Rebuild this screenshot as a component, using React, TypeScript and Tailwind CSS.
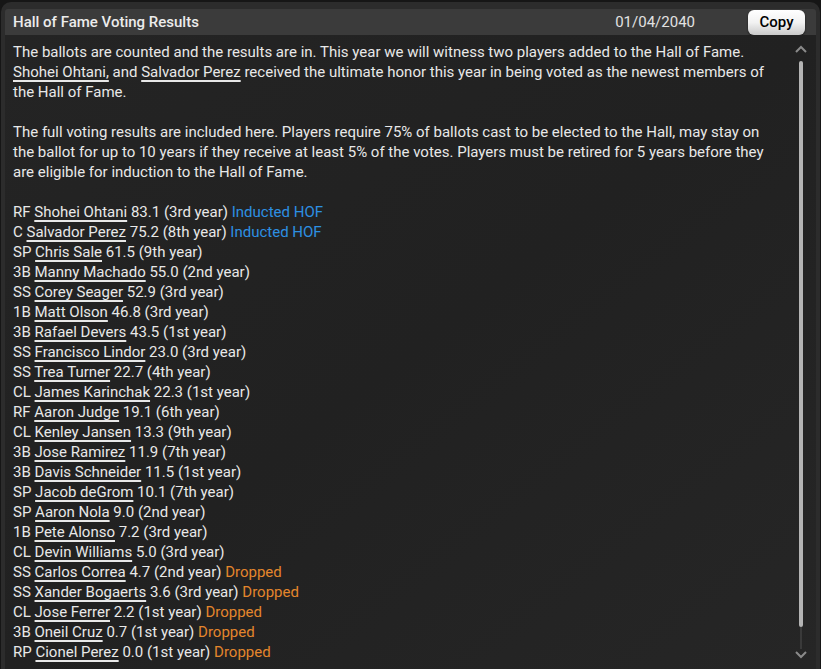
import React from 'react';

type Row = { pos: string; name: string; pct: string; year: string; status?: 'hof' | 'drop' };

const rows: Row[] = [
  { pos: 'RF', name: 'Shohei Ohtani', pct: '83.1', year: '3rd', status: 'hof' },
  { pos: 'C', name: 'Salvador Perez', pct: '75.2', year: '8th', status: 'hof' },
  { pos: 'SP', name: 'Chris Sale', pct: '61.5', year: '9th' },
  { pos: '3B', name: 'Manny Machado', pct: '55.0', year: '2nd' },
  { pos: 'SS', name: 'Corey Seager', pct: '52.9', year: '3rd' },
  { pos: '1B', name: 'Matt Olson', pct: '46.8', year: '3rd' },
  { pos: '3B', name: 'Rafael Devers', pct: '43.5', year: '1st' },
  { pos: 'SS', name: 'Francisco Lindor', pct: '23.0', year: '3rd' },
  { pos: 'SS', name: 'Trea Turner', pct: '22.7', year: '4th' },
  { pos: 'CL', name: 'James Karinchak', pct: '22.3', year: '1st' },
  { pos: 'RF', name: 'Aaron Judge', pct: '19.1', year: '6th' },
  { pos: 'CL', name: 'Kenley Jansen', pct: '13.3', year: '9th' },
  { pos: '3B', name: 'Jose Ramirez', pct: '11.9', year: '7th' },
  { pos: '3B', name: 'Davis Schneider', pct: '11.5', year: '1st' },
  { pos: 'SP', name: 'Jacob deGrom', pct: '10.1', year: '7th' },
  { pos: 'SP', name: 'Aaron Nola', pct: '9.0', year: '2nd' },
  { pos: '1B', name: 'Pete Alonso', pct: '7.2', year: '3rd' },
  { pos: 'CL', name: 'Devin Williams', pct: '5.0', year: '3rd' },
  { pos: 'SS', name: 'Carlos Correa', pct: '4.7', year: '2nd', status: 'drop' },
  { pos: 'SS', name: 'Xander Bogaerts', pct: '3.6', year: '3rd', status: 'drop' },
  { pos: 'CL', name: 'Jose Ferrer', pct: '2.2', year: '1st', status: 'drop' },
  { pos: '3B', name: 'Oneil Cruz', pct: '0.7', year: '1st', status: 'drop' },
  { pos: 'RP', name: 'Cionel Perez', pct: '0.0', year: '1st', status: 'drop' },
];

const Link: React.FC<{ children: React.ReactNode }> = ({ children }) => (
  <span className="underline decoration-[1.5px] underline-offset-[3px]">{children}</span>
);

export default function App() {
  return (
    <div
      className="w-[821px] h-[669px] overflow-hidden bg-[#161616] pt-[2px] px-[1px]"
      style={{ fontFamily: 'Roboto, "Noto Sans", sans-serif' }}
    >
      <div className="h-full rounded-t-[10px] bg-[#2c2c2c] px-[4px] pt-[7px] flex flex-col">
        {/* header */}
        <div className="h-[26px] shrink-0 bg-[#3b3b3b] rounded-t-[3px] flex items-center pl-[8px] pr-[11px] text-[15px] text-[#ececec]">
          <span className="font-medium">Hall of Fame Voting Results</span>
          <span className="ml-auto mr-[53px] text-[#e2e2e2]">01/04/2040</span>
          <button className="h-[25px] w-[57px] rounded-[6px] bg-gradient-to-b from-white via-[#f2f2f2] to-[#c9c9c9] text-black text-[15px] font-medium shadow-[0_1px_2px_rgba(0,0,0,0.6)]">
            Copy
          </button>
        </div>

        {/* body */}
        <div className="flex-1 flex bg-gradient-to-br from-[#242424] via-[#212121] to-[#262626] text-[15px] leading-[20px] text-[#e8e8e8]">
          <div className="w-[776px] shrink-0 pl-[8px] pt-[7px]">
            <p>
              The ballots are counted and the results are in. This year we will witness two players added to the Hall of Fame.{' '}
              <Link>Shohei Ohtani,</Link> and <Link>Salvador Perez</Link> received the ultimate honor this year in being voted as the newest members of the Hall of Fame.
            </p>
            <p className="mt-[20px]">
              The full voting results are included here. Players require 75% of ballots cast to be elected to the Hall, may stay on the ballot for up to 10 years if they receive at least 5% of the votes. Players must be retired for 5 years before they are eligible for induction to the Hall of Fame.
            </p>
            <div className="mt-[20px]">
              {rows.map((r) => (
                <div key={r.name}>
                  {r.pos} <Link>{r.name}</Link> {r.pct} ({r.year} year)
                  {r.status === 'hof' && <span className="text-[#2d90e2]"> Inducted HOF</span>}
                  {r.status === 'drop' && <span className="text-[#e4862c]"> Dropped</span>}
                </div>
              ))}
            </div>
          </div>

          {/* scrollbar */}
          <div className="flex-1 flex flex-col items-center pt-[10px] pb-[6px] pl-[4px]">
            <svg width="12" height="8" viewBox="0 0 12 8" className="shrink-0">
              <path d="M1 7 L6 2 L11 7" stroke="#8a8a8a" strokeWidth="2" fill="none" />
            </svg>
            <div className="mt-[8px] w-[4px] h-[566px] rounded-full bg-[#b4b4b4]" />
            <div className="w-[2px] h-[22px] bg-[#3a3a3a]" />
            <svg width="12" height="8" viewBox="0 0 12 8" className="shrink-0 mt-[2px]">
              <path d="M1 1 L6 6 L11 1" stroke="#8a8a8a" strokeWidth="2" fill="none" />
            </svg>
          </div>
        </div>
      </div>
    </div>
  );
}
